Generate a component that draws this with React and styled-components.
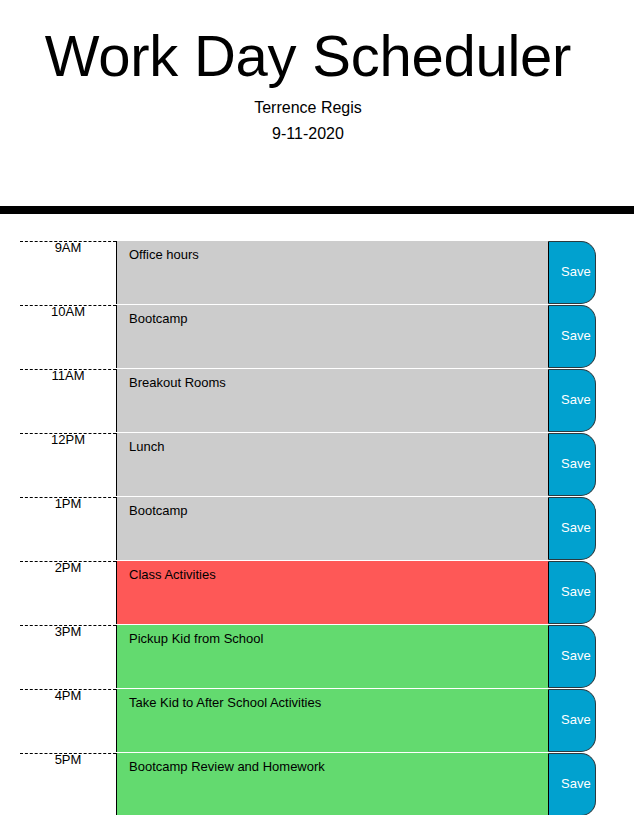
import React from 'react';
import styled, { createGlobalStyle } from 'styled-components';

const GlobalStyle = createGlobalStyle`
  html, body {
    margin: 0;
    padding: 0;
    overflow: hidden;
    background: #ffffff;
  }
  body {
    font-family: "Liberation Sans", Arial, Helvetica, sans-serif;
    color: #000000;
  }
`;

const colors = {
  past: '#cccccc',
  present: '#fe5857',
  future: '#63da6f',
};

const Jumbotron = styled.header`
  width: 100%;
  border-bottom: 8px solid #000000;
`;

const HeaderInner = styled.div`
  width: 616px;
  padding: 21px 0 59px;
  text-align: center;
`;

const Title = styled.h1`
  margin: 0;
  font-size: 58px;
  line-height: 70px;
  font-weight: 300;
  letter-spacing: -0.25px;
`;

const Lead = styled.p`
  margin: 0;
  font-size: 16px;
  line-height: 26px;

  &:first-of-type {
    margin-top: 4px;
  }
`;

const Schedule = styled.main`
  width: 576px;
  margin: 26px 0 0 20px;
`;

const Row = styled.div`
  display: grid;
  grid-template-columns: 96px 432px 48px;
  height: 64px;
  box-sizing: border-box;
  border-top: 1px solid #ffffff;
`;

const Hour = styled.div`
  border-top: 1px dashed #000000;
  font-size: 13px;
  line-height: 11px;
  text-align: center;
`;

const Description = styled.textarea`
  box-sizing: border-box;
  margin: 0;
  height: 63px;
  resize: none;
  border: none;
  border-left: 1px solid #000000;
  border-radius: 0;
  outline: none;
  padding: 5px 12px;
  font-family: inherit;
  font-size: 13px;
  line-height: 17px;
  color: #000000;
  background-color: ${(p) => colors[p.$status]};
  overflow: hidden;
`;

const SaveBtn = styled.button`
  box-sizing: border-box;
  height: 63px;
  margin: 0;
  padding: 0 0 2px 12px;
  display: flex;
  align-items: center;
  white-space: nowrap;
  border: 1px solid #2b3a3f;
  border-left-color: #000000;
  border-radius: 0 15px 15px 0;
  background-color: #01a1cf;
  color: #ffffff;
  font-family: inherit;
  font-size: 13px;
  cursor: pointer;
`;

const hours = [
  { label: '9AM', text: 'Office hours', status: 'past' },
  { label: '10AM', text: 'Bootcamp', status: 'past' },
  { label: '11AM', text: 'Breakout Rooms', status: 'past' },
  { label: '12PM', text: 'Lunch', status: 'past' },
  { label: '1PM', text: 'Bootcamp', status: 'past' },
  { label: '2PM', text: 'Class Activities', status: 'present' },
  { label: '3PM', text: 'Pickup Kid from School', status: 'future' },
  { label: '4PM', text: 'Take Kid to After School Activities', status: 'future' },
  { label: '5PM', text: 'Bootcamp Review and Homework', status: 'future' },
];

export default function App() {
  return (
    <>
      <GlobalStyle />
      <Jumbotron>
        <HeaderInner>
          <Title>Work Day Scheduler</Title>
          <Lead>Terrence Regis</Lead>
          <Lead>9-11-2020</Lead>
        </HeaderInner>
      </Jumbotron>
      <Schedule>
        {hours.map((h) => (
          <Row key={h.label}>
            <Hour>{h.label}</Hour>
            <Description $status={h.status} defaultValue={h.text} />
            <SaveBtn>Save</SaveBtn>
          </Row>
        ))}
      </Schedule>
    </>
  );
}
